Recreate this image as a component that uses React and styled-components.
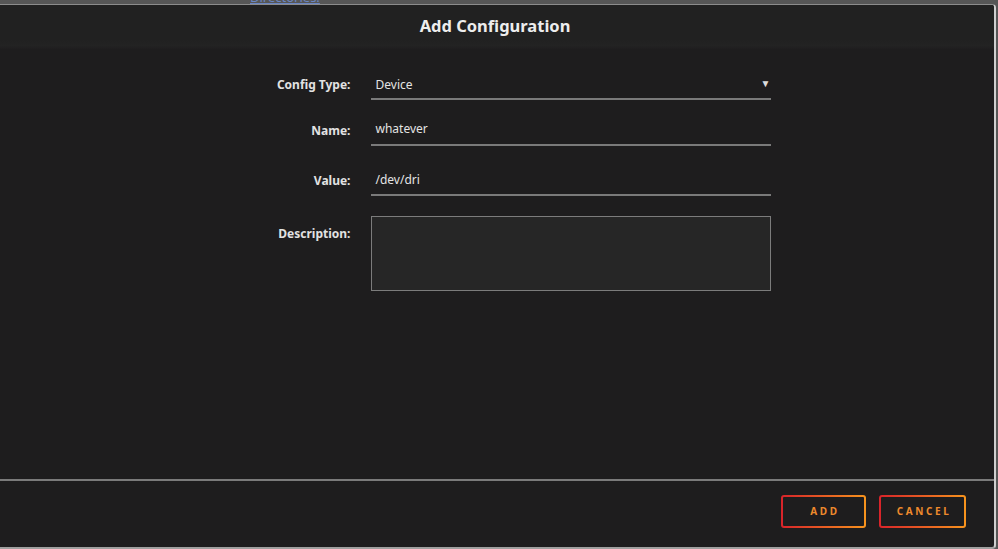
import React from "react";
import styled, { createGlobalStyle } from "styled-components";

const Global = createGlobalStyle`
  html, body { margin: 0; padding: 0; overflow: hidden; background: #555555; }
  body { font-family: "Noto Sans", "Open Sans", sans-serif; }
  * { box-sizing: border-box; }
`;

const Backdrop = styled.div`
  width: 998px;
  height: 549px;
  display: flex;
  flex-direction: column;
  background: #565656;
  overflow: hidden;
`;

const Peek = styled.div`
  height: 4px;
  overflow: hidden;
  padding-left: 250px;
`;

const PeekLink = styled.span`
  display: block;
  margin-top: -10px;
  font-size: 13px;
  line-height: 14px;
  color: #6a86c4;
  text-decoration: underline;
`;

const Dialog = styled.div`
  margin-left: -6px;
  width: 1002px;
  height: 545px;
  display: flex;
  flex-direction: column;
  background: #1e1d1e;
  border-top: 1px solid #8c8c8c;
  border-right: 2px solid #cfcfcf;
  border-bottom: 2px solid #a0a0a0;
  border-left: 2px solid #8c8c8c;
  border-radius: 4px;
  overflow: hidden;
`;

const Header = styled.div`
  height: 44px;
  flex: none;
  display: flex;
  align-items: center;
  justify-content: center;
  padding-bottom: 3px;
  background: linear-gradient(#212121 0%, #212121 80%, #232323 92%, #1f1e1f 100%);
`;

const Title = styled.h2`
  margin: 0;
  font-size: 16.5px;
  font-weight: 700;
  color: #ededed;
`;

const Body = styled.div`
  flex: 1;
  padding-top: 21px;
  display: flex;
  flex-direction: column;
  align-items: center;
`;

const Form = styled.div`
  display: flex;
  flex-direction: column;
`;

const Row = styled.div`
  display: grid;
  grid-template-columns: 131px 400px;
  column-gap: 20px;
  align-items: ${(p) => (p.$top ? "start" : "center")};
  margin-top: ${(p) => p.$gap || 0}px;
`;

const Label = styled.label`
  text-align: right;
  font-size: 12px;
  font-weight: 700;
  color: #e2e2e2;
  padding-top: ${(p) => (p.$top ? "9px" : "0")};
  padding-bottom: ${(p) => (p.$top ? "0" : "2px")};
`;

const Field = styled.div`
  position: relative;
  height: 30px;
  display: flex;
  align-items: center;
  padding: 0 5px ${(p) => p.$pb ?? 2}px;
  border-bottom: 2px solid #7a7a7a;
  font-size: 12px;
  color: #e4e4e4;
`;

const Caret = styled.span`
  position: absolute;
  right: 0;
  top: 6px;
  font-size: 10px;
  color: #dcdcdc;
`;

const TextArea = styled.div`
  height: 75px;
  background: #262626;
  border: 1px solid #7c7c7c;
`;

const Footer = styled.div`
  height: 68px;
  flex: none;
  border-top: 2px solid #7b7b7b;
  display: flex;
  align-items: center;
  justify-content: flex-end;
  gap: 13px;
  padding-right: 28px;
  padding-bottom: 6px;
`;

const Button = styled.button`
  width: ${(p) => p.$w}px;
  height: 33px;
  border: 2px solid transparent;
  border-radius: 3px;
  background:
    linear-gradient(#1e1d1e, #1e1d1e) padding-box,
    linear-gradient(90deg, #d8232a, #f7941d) border-box;
  color: #ee8a2c;
  font-family: "Noto Sans", "Open Sans", sans-serif;
  font-size: 10px;
  font-weight: 700;
  letter-spacing: 2.6px;
  padding: 0 0 0 3px;
  cursor: pointer;
`;

export default function App() {
  return (
    <>
      <Global />
      <Backdrop>
        <Peek>
          <PeekLink>Directories.</PeekLink>
        </Peek>
        <Dialog>
          <Header>
            <Title>Add Configuration</Title>
          </Header>
          <Body>
            <Form>
              <Row>
                <Label>Config Type:</Label>
                <Field $pb={0}>
                  Device
                  <Caret>▼</Caret>
                </Field>
              </Row>
              <Row $gap={16}>
                <Label>Name:</Label>
                <Field $pb={4}>whatever</Field>
              </Row>
              <Row $gap={20}>
                <Label>Value:</Label>
                <Field>/dev/dri</Field>
              </Row>
              <Row $gap={20} $top>
                <Label $top>Description:</Label>
                <TextArea />
              </Row>
            </Form>
          </Body>
          <Footer>
            <Button $w={85}>ADD</Button>
            <Button $w={87}>CANCEL</Button>
          </Footer>
        </Dialog>
      </Backdrop>
    </>
  );
}
